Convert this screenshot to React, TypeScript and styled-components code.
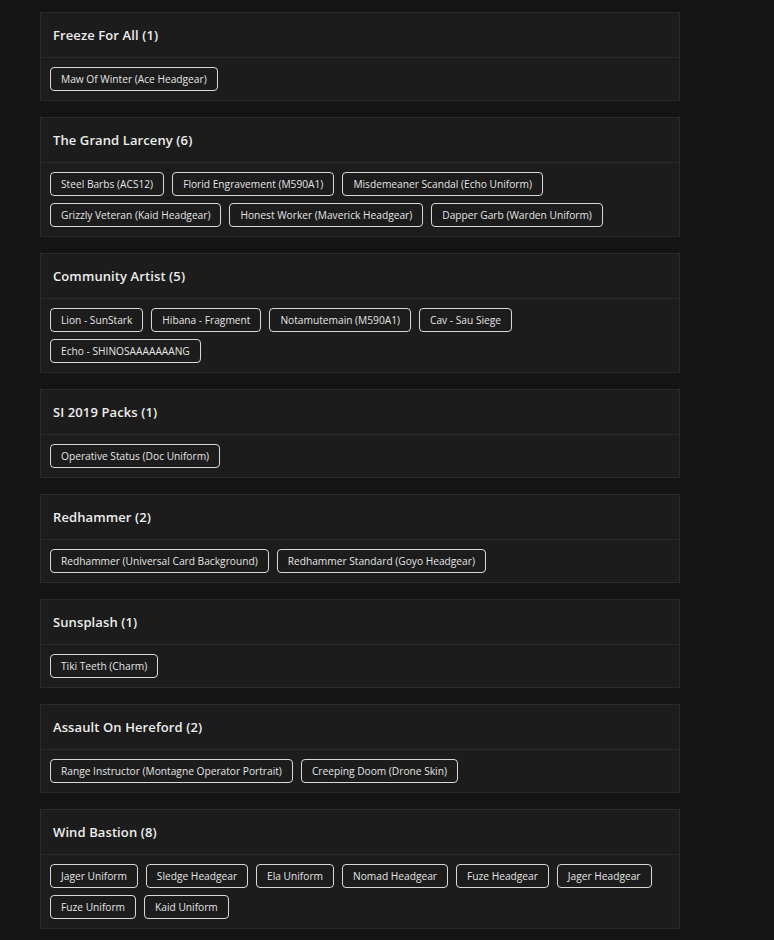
import React from "react";
import styled, { createGlobalStyle } from "styled-components";

type Collection = {
  title: string;
  items: string[];
};

const collections: Collection[] = [
  { title: "Freeze For All", items: ["Maw Of Winter (Ace Headgear)"] },
  {
    title: "The Grand Larceny",
    items: [
      "Steel Barbs (ACS12)",
      "Florid Engravement (M590A1)",
      "Misdemeaner Scandal (Echo Uniform)",
      "Grizzly Veteran (Kaid Headgear)",
      "Honest Worker (Maverick Headgear)",
      "Dapper Garb (Warden Uniform)",
    ],
  },
  {
    title: "Community Artist",
    items: [
      "Lion - SunStark",
      "Hibana - Fragment",
      "Notamutemain (M590A1)",
      "Cav - Sau Siege",
      "Echo - SHINOSAAAAAAANG",
    ],
  },
  { title: "SI 2019 Packs", items: ["Operative Status (Doc Uniform)"] },
  {
    title: "Redhammer",
    items: [
      "Redhammer (Universal Card Background)",
      "Redhammer Standard (Goyo Headgear)",
    ],
  },
  { title: "Sunsplash", items: ["Tiki Teeth (Charm)"] },
  {
    title: "Assault On Hereford",
    items: [
      "Range Instructor (Montagne Operator Portrait)",
      "Creeping Doom (Drone Skin)",
    ],
  },
  {
    title: "Wind Bastion",
    items: [
      "Jager Uniform",
      "Sledge Headgear",
      "Ela Uniform",
      "Nomad Headgear",
      "Fuze Headgear",
      "Jager Headgear",
      "Fuze Uniform",
      "Kaid Uniform",
    ],
  },
];

const GlobalStyle = createGlobalStyle`
  body {
    margin: 0;
    background-color: #141414;
    font-family: "Open Sans", "Noto Sans", sans-serif;
    color: #e6e6e6;
  }
`;

const Page = styled.div`
  width: 640px;
  padding: 12px 40px;
  display: flex;
  flex-direction: column;
  gap: 16px;
`;

const Card = styled.section`
  background-color: #1c1c1c;
  border: 1px solid #2a2a2a;
`;

const CardHeader = styled.div`
  height: 44px;
  display: flex;
  align-items: center;
  padding: 0 12px;
  border-bottom: 1px solid #2a2a2a;
  font-size: 13px;
  font-weight: 600;
  letter-spacing: 0.1px;
  color: #ededed;
`;

const TagList = styled.div`
  display: flex;
  flex-wrap: wrap;
  gap: 7px 8px;
  padding: 9px;
`;

const Tag = styled.span`
  display: inline-flex;
  align-items: center;
  height: 22px;
  padding: 0 10px;
  border: 1px solid #d8d8d8;
  border-radius: 4px;
  font-size: 10.2px;
  color: #e4e4e4;
  white-space: nowrap;
`;

const App = () => {
  return (
    <>
      <GlobalStyle />
      <Page>
        {collections.map((c) => (
          <Card key={c.title}>
            <CardHeader>
              {c.title} ({c.items.length})
            </CardHeader>
            <TagList>
              {c.items.map((item) => (
                <Tag key={item}>{item}</Tag>
              ))}
            </TagList>
          </Card>
        ))}
      </Page>
    </>
  );
};

export default App;
